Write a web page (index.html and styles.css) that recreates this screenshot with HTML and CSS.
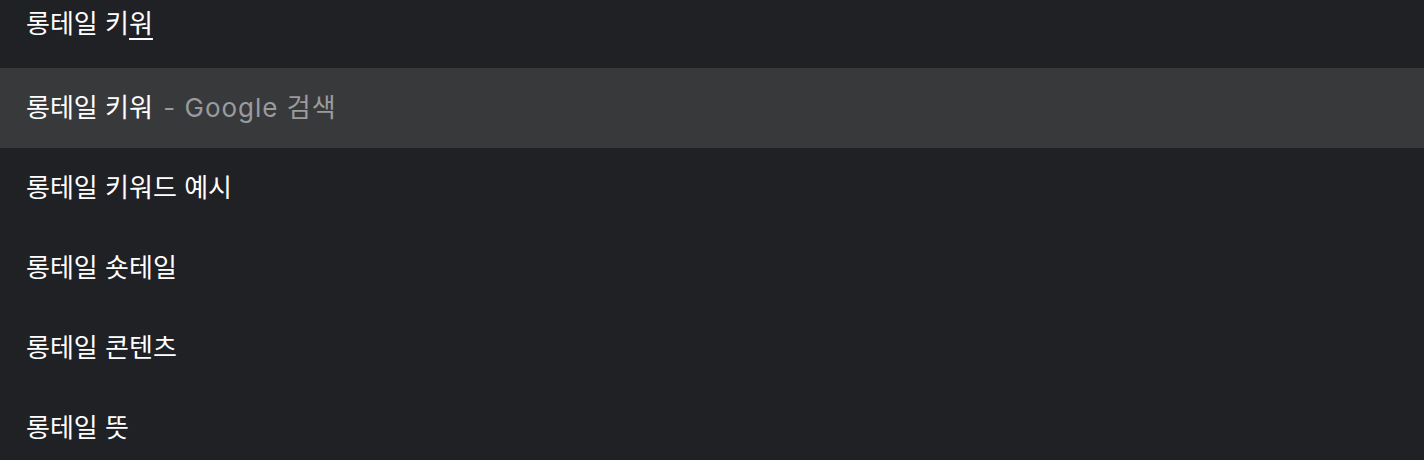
FILE: index.html
```html
<!DOCTYPE html>
<html lang="ko">
<head>
    <meta charset="UTF-8">
    <meta name="viewport" content="width=device-width, initial-scale=1.0">
    <title>롱테일 키워드</title>
    <link rel="stylesheet" href="styles.css">
</head>
<body>
    <div class="suggestions">
        <div class="query">롱테일 키<span class="composing">워</span></div>
        <ul>
            <li class="active">롱테일 키워 <span class="hint">- Google 검색</span></li>
            <li>롱테일 키워드 예시</li>
            <li>롱테일 숏테일</li>
            <li>롱테일 콘텐츠</li>
            <li>롱테일 뜻</li>
        </ul>
    </div>
</body>
</html>
```

FILE: styles.css
```css
body {
    margin: 0;
    padding: 0;
    background-color: #202124;
    font-family: Inter, "Noto Sans CJK KR", sans-serif;
    color: #ffffff;
}
.suggestions {
    width: 100%;
}
.query {
    height: 68px;
    padding-left: 26px;
    font-size: 26px;
    line-height: 47px;
    box-sizing: border-box;
}
.composing {
    text-decoration: underline;
    text-underline-offset: 5px;
    text-decoration-thickness: 2px;
}
.suggestions ul {
    list-style-type: none;
    margin: 0;
    padding: 0;
}
.suggestions ul li {
    height: 80px;
    line-height: 79px;
    padding-left: 26px;
    font-size: 26px;
}
.suggestions ul li.active {
    background-color: #38393b;
}
.hint {
    color: #9a9b9d;
    letter-spacing: 1px;
    margin-left: 3px;
}
```
